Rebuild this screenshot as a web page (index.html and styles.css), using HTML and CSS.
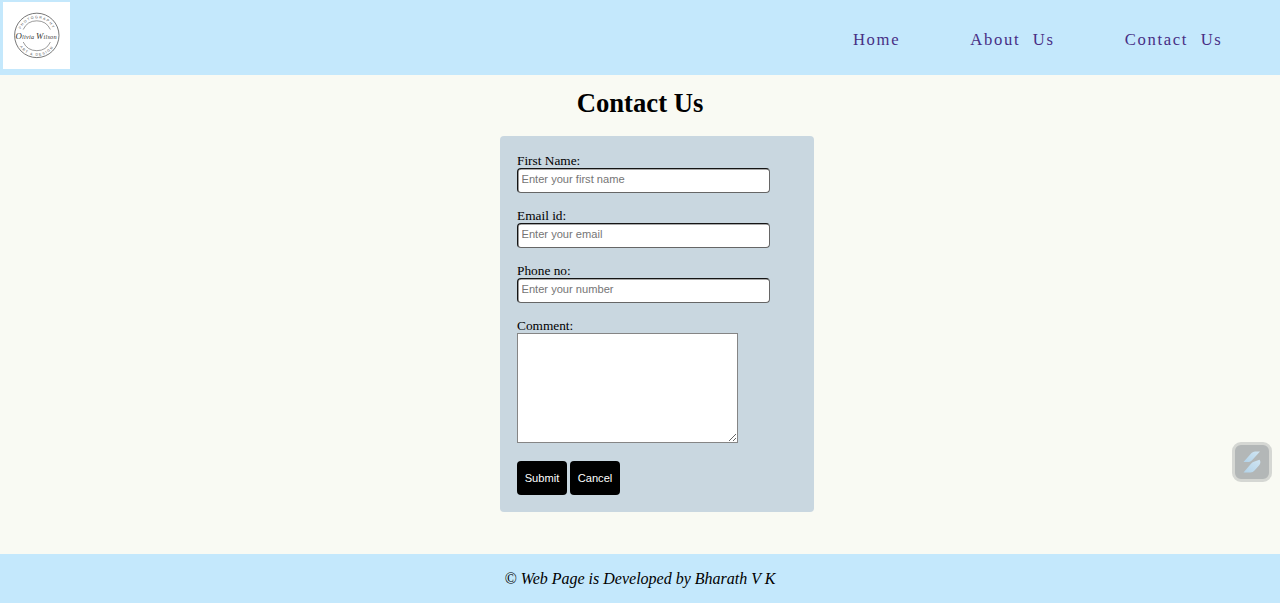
FILE: index.html
```html
<!DOCTYPE html>
<html lang="en">
<head>
<meta charset="utf-8">
<title>Contact Us</title>
<link rel="stylesheet" href="styles.css">
</head>
<body>
<header class="header">
  <svg class="logo" viewBox="0 0 67 67" role="img" aria-label="Olivia Wilson">
    <defs>
      <path id="arc-top" d="M16.6 33.5a17.2 17.2 0 0 1 34.4 0"/>
      <path id="arc-bottom" d="M13.5 33.5a20.3 20.3 0 0 0 40.6 0"/>
    </defs>
    <rect width="67" height="67" fill="#fff"/>
    <g fill="none" stroke="#555" stroke-width=".8">
      <circle cx="33.8" cy="33.4" r="22.2"/>
      <path d="M20.2 27.5a15 15 0 0 1 27.2 0M20.2 40a15 15 0 0 0 27.2 0" stroke-width=".6"/>
    </g>
    <text class="logo-ring"><textPath href="#arc-top" startOffset="50%">PHOTOGRAPHY</textPath></text>
    <text class="logo-ring"><textPath href="#arc-bottom" startOffset="50%">ART &amp; DESIGN</textPath></text>
    <text class="logo-name" x="12.5" y="36.5"><tspan class="logo-cap">O</tspan>livia <tspan class="logo-cap">W</tspan>ilson</text>
  </svg>
  <nav class="nav">
    <a class="nav-link" href="#home">Home</a>
    <a class="nav-link" href="#about">About Us</a>
    <a class="nav-link" href="#contact">Contact Us</a>
  </nav>
</header>
<main class="main">
  <h1 class="title">Contact Us</h1>
  <form class="form">
    <label class="field">First Name:<input class="input" type="text" placeholder="Enter your first name"></label>
    <label class="field">Email id:<input class="input" type="email" placeholder="Enter your email"></label>
    <label class="field">Phone no:<input class="input" type="text" placeholder="Enter your number"></label>
    <label class="field">Comment:<textarea class="comment"></textarea></label>
    <div class="actions">
      <button class="button" type="submit">Submit</button>
      <button class="button" type="reset">Cancel</button>
    </div>
  </form>
</main>
<footer class="footer">© Web Page is Developed by Bharath V K</footer>
<div class="widget">
  <svg width="20" height="24" viewBox="0 0 20 24">
    <defs><linearGradient id="shade" x1="1" y1="0" x2="0" y2="1"><stop stop-color="#d0e5f2"/><stop offset="1" stop-color="#b3d3e9"/></linearGradient></defs>
    <path d="M1.500 12 9.500 3Q11 1.500 13 1.500H18L10.500 9.800Q9 11.600 7 12Z" fill="url(#shade)"/>
    <path d="M1.500 22.500 9 13.800Q10.500 12 12.500 11.500L17.500 9.800Q19.500 12.500 17 15.500L12.500 20.500Q11 22.500 8.500 22.500Z" fill="url(#shade)"/>
  </svg>
</div>
</body>
</html>
```
FILE: styles.css
```css
* { box-sizing: border-box; }

body {
  margin: 0;
  height: 603px;
  display: flex;
  flex-direction: column;
  overflow: hidden;
  background: #f9faf3;
  color: #000;
  font-family: "Liberation Serif", "Times New Roman", serif;
  font-size: 13.33px;
}

.header {
  display: flex;
  justify-content: space-between;
  height: 75px;
  padding: 2px 57.5px 0 3px;
  background: #c4e8fc;
}

.logo { width: 67px; height: 67px; }

.logo-ring {
  fill: #555;
  font: 3.6px "Liberation Sans", sans-serif;
  letter-spacing: 1.2px;
  text-anchor: middle;
}

.logo-name {
  fill: #333;
  font: italic 6.3px "Liberation Serif", serif;
  letter-spacing: .2px;
}

.logo-cap { font-size: 8.8px; }

.nav { display: flex; gap: 70px; padding-top: 28px; }

.nav-link {
  color: #482f85;
  font-size: 16.67px;
  line-height: 20px;
  letter-spacing: 1.67px;
  word-spacing: 6.67px;
  text-decoration: none;
}

.main { flex: 1; }

.title {
  margin: 13px 0 17px;
  font-size: 26.67px;
  line-height: 31px;
  text-align: center;
}

.form {
  width: 314px;
  height: 376px;
  margin-left: 500px;
  padding: 17px;
  border-radius: 4px;
  background: #c9d7e0;
}

.field {
  display: block;
  height: 55px;
  line-height: 15px;
}

.field:nth-of-type(4) { height: 143px; }

.input {
  display: block;
  width: 253px;
  height: 24.5px;
  padding: 0 3px 3px 3.5px;
  border: 1.5px solid;
  border-color: #151515 #666 #666 #151515;
  border-radius: 4px;
  background: #fff;
  box-shadow: inset .4px .4px 0 .2px #555;
  font: 11.11px "Liberation Sans", Arial, sans-serif;
}

.input::placeholder { color: #757575; }

.comment {
  display: block;
  width: 221px;
  height: 110px;
  border: 1px solid #858585;
  border-radius: 0;
  background: #fff;
  resize: both;
}

.actions { display: flex; gap: 3px; }

.button {
  width: 50px;
  height: 34px;
  padding: 0;
  border: 0;
  border-radius: 4px;
  background: #000;
  color: #fff;
  font: 11.11px "Liberation Sans", Arial, sans-serif;
}

.footer {
  height: 49px;
  padding-top: 15px;
  background: #c4e8fc;
  font-size: 16px;
  font-style: italic;
  line-height: 20px;
  text-align: center;
}

.widget {
  position: absolute;
  right: 8px;
  bottom: 121px;
  display: flex;
  align-items: center;
  justify-content: center;
  width: 40px;
  height: 40px;
  border: 3px solid #d5d7d3;
  border-radius: 9px;
  background: #b3b7b7;
}
```
